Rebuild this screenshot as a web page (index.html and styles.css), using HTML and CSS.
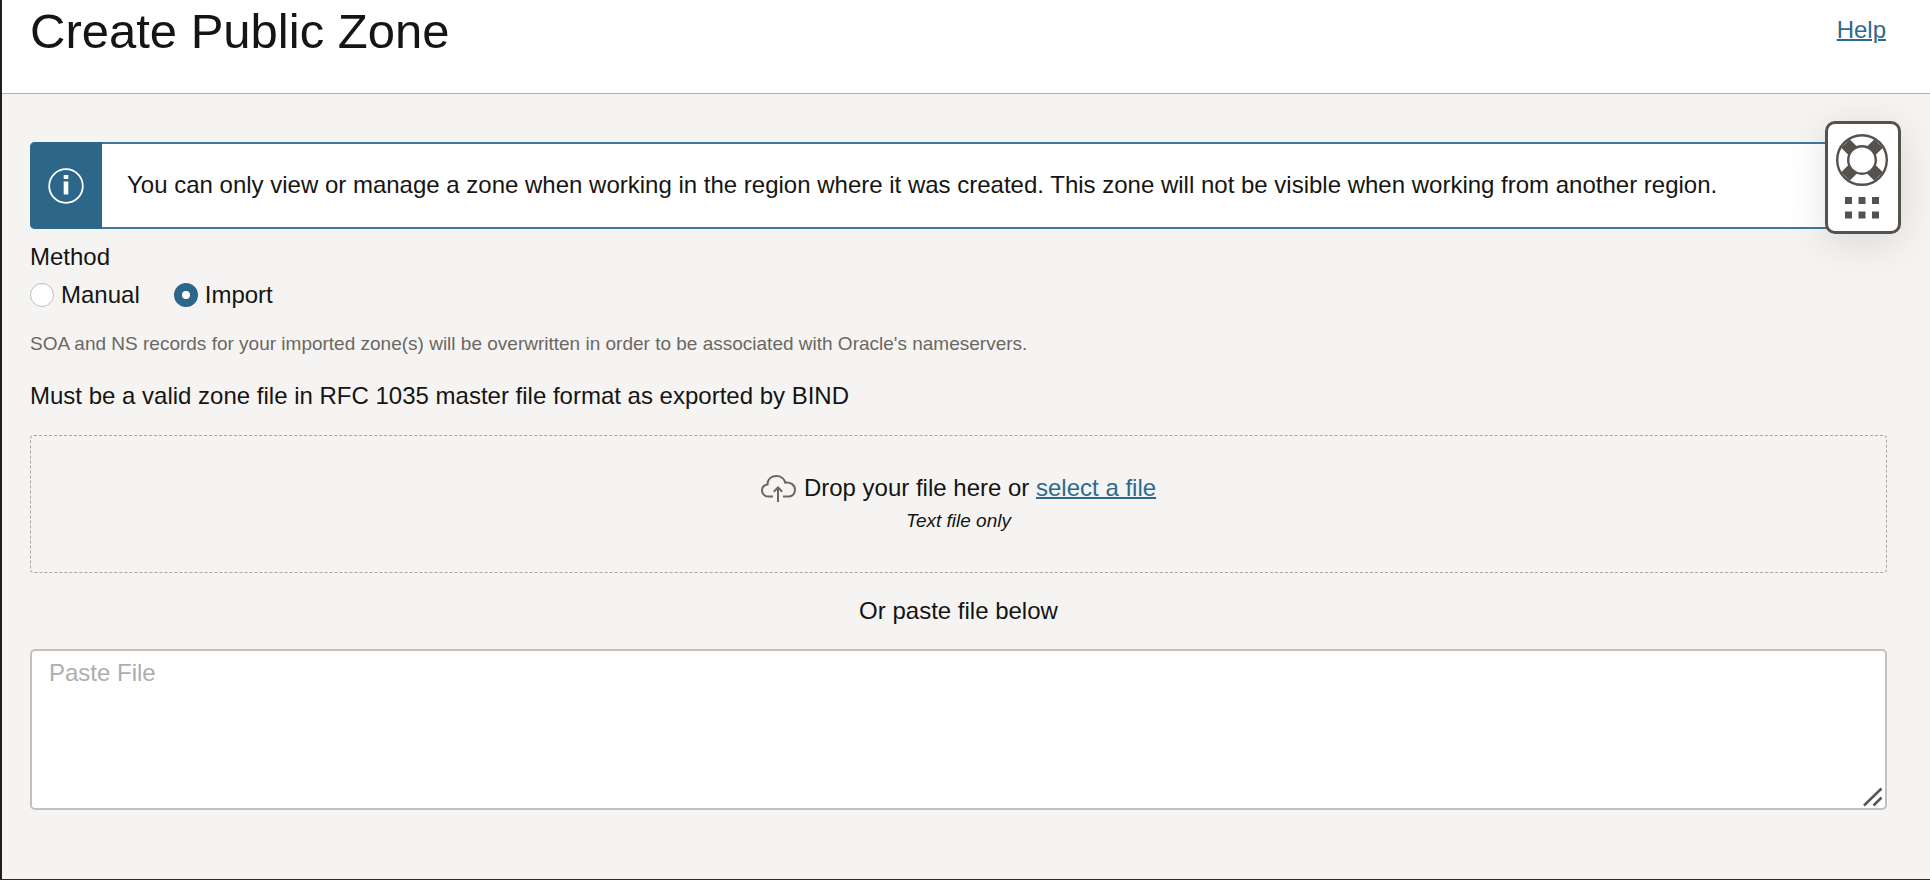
FILE: index.html
```html
<!DOCTYPE html>
<html lang="en">
<head>
<meta charset="utf-8">
<title>Create Public Zone</title>
<link rel="stylesheet" href="styles.css">
</head>
<body>
<header class="header">
  <h1 class="title">Create Public Zone</h1>
  <a class="link" href="#help">Help</a>
</header>
<main class="content">
  <div class="alert" role="note">
    <div class="alert-badge">
      <svg width="36" height="36" viewBox="0 0 36 36" aria-hidden="true">
        <circle cx="18" cy="18" r="16.8" fill="none" stroke="#fff" stroke-width="1.800"/>
        <path d="M15.700 7h4.600v4h-4.600zM15.700 13.500h4.600v13h-4.600z" fill="#fff"/>
      </svg>
    </div>
    <p class="alert-text">You can only view or manage a zone when working in the region where it was created. This zone will not be visible when working from another region.</p>
  </div>
  <fieldset class="method">
    <legend class="legend">Method</legend>
    <div class="options">
      <label class="option"><input class="radio" type="radio" name="method" value="manual">Manual</label>
      <label class="option"><input class="radio" type="radio" name="method" value="import" checked>Import</label>
    </div>
  </fieldset>
  <p class="hint">SOA and NS records for your imported zone(s) will be overwritten in order to be associated with Oracle's nameservers.</p>
  <p class="format">Must be a valid zone file in RFC 1035 master file format as exported by BIND</p>
  <div class="drop">
    <div class="drop-row">
      <svg class="cloud" width="35" height="27" viewBox="0 0 35 27" fill="none" stroke="#6b6762" stroke-width="2" aria-hidden="true">
        <path d="M12 21.500H7C3.500 21.500 1 18.500 1 15.500C1 12 3.500 10 6.500 9.500C6.500 4 10.500 1 15.500 1C20 1 23.300 4 24.300 7.700C29.500 7 34 10 34 14.800C34 19 31 21.500 28 21.500H22"/>
        <path d="M17 27V12.500M12.800 16.700L17 12.500L21.200 16.700"/>
      </svg>
      <span>Drop your file here or <a class="link" href="#select">select a file</a></span>
    </div>
    <em class="drop-note">Text file only</em>
  </div>
  <label class="paste-label" for="paste">Or paste file below</label>
  <div class="paste">
    <textarea class="paste-input" id="paste" placeholder="Paste File"></textarea>
    <svg class="grip" width="20" height="20" viewBox="0 0 20 20" fill="none" stroke="#55565a" stroke-width="2.500" aria-hidden="true">
      <path d="M1 18.500L18.500 1.500M10.500 18.500L18.500 10.500"/>
    </svg>
  </div>
</main>
<button class="support" type="button" aria-label="Support">
  <svg width="52" height="86" viewBox="0 0 52 86" aria-hidden="true">
    <circle cx="26" cy="26" r="24.800" fill="#fff" stroke="#55524e" stroke-width="2.400"/>
    <path d="M9.400 9.400L42.600 42.600M42.600 9.400L9.400 42.600" stroke="#55524e" stroke-width="12"/>
    <circle cx="26" cy="26" r="13.800" fill="#fff" stroke="#55524e" stroke-width="2.400"/>
    <path d="M9 63h7v7H9zM22.500 63h7v7h-7zM36 63h7v7h-7zM9 77.500h7v7H9zM22.500 77.500h7v7h-7zM36 77.500h7v7h-7z" fill="#55524e"/>
  </svg>
</button>
</body>
</html>
```
FILE: styles.css
```css
* { box-sizing: border-box; }
body {
  margin: 0;
  min-height: 100vh;
  display: flex;
  flex-direction: column;
  position: relative;
  background: #f5f4f2;
  border-left: 2px solid #1f1f1f;
  border-bottom: 1px solid #2b2b2b;
  color: #161513;
  font: 24px/28px "Liberation Sans", Arial, sans-serif;
}
p, h1 { margin: 0; }
.header {
  display: flex;
  justify-content: space-between;
  align-items: flex-start;
  padding: 3px 44px 34px 28px;
  background: #fff;
  border-bottom: 1px solid #b5b0ab;
}
.title { font-size: 49px; line-height: 56px; font-weight: 400; }
.header .link { margin-top: 13px; }
.link { color: #2c6a8f; text-decoration: underline; text-decoration-thickness: 2px; }
.content {
  display: flex;
  flex-direction: column;
  padding: 48px 43px 0 28px;
}
.alert {
  display: flex;
  min-height: 87px;
  background: #fff;
  border: 2px solid #3f789a;
  border-radius: 5px;
}
.alert-badge {
  display: flex;
  align-items: center;
  justify-content: center;
  width: 72px;
  flex: none;
  margin: -2px 0 -2px -2px;
  background: #2c6789;
  border-radius: 5px 0 0 5px;
}
.alert-text { align-self: center; padding: 0 25px 2px; }
.method { margin: 14px 0 0; padding: 0; border: 0; min-width: 0; }
.legend { padding: 0; }
.options { display: flex; gap: 34px; padding-top: 10px; }
.option { display: flex; align-items: center; gap: 7px; }
.radio {
  appearance: none;
  width: 24px;
  height: 24px;
  margin: 0;
  background: #fff;
  border: 1px solid #bcbfc2;
  border-radius: 50%;
}
.radio:checked { border: 8px solid #2c6789; }
.hint { margin-top: 24px; font-size: 19px; line-height: 22px; color: #6b6762; }
.format { margin-top: 27px; }
.drop {
  display: flex;
  flex-direction: column;
  align-items: center;
  gap: 8px;
  margin-top: 25px;
  padding: 38px 16px 40px;
  border: 1px dashed #aaa7a2;
  border-radius: 4px;
}
.drop-row { display: flex; align-items: center; gap: 8px; }
.drop-note { font-size: 19px; line-height: 22px; }
.paste-label { align-self: center; margin-top: 24px; }
.paste { position: relative; display: flex; margin-top: 24px; }
.paste-input {
  flex: 1;
  height: 161px;
  padding: 8px 17px;
  border: 2px solid #c4c0bb;
  border-radius: 5px;
  background: #fff;
  color: #161513;
  font: inherit;
  resize: none;
}
.paste-input::placeholder { color: #aeaeae; }
.grip { position: absolute; right: 4px; bottom: 3px; }
.support {
  position: absolute;
  top: 121px;
  right: 29px;
  display: flex;
  padding: 10px 10px 11px 8px;
  background: #fff;
  border: 3px solid #55524e;
  border-radius: 10px;
  box-shadow: 0 8px 40px rgba(0, 0, 0, 0.12);
}
```
